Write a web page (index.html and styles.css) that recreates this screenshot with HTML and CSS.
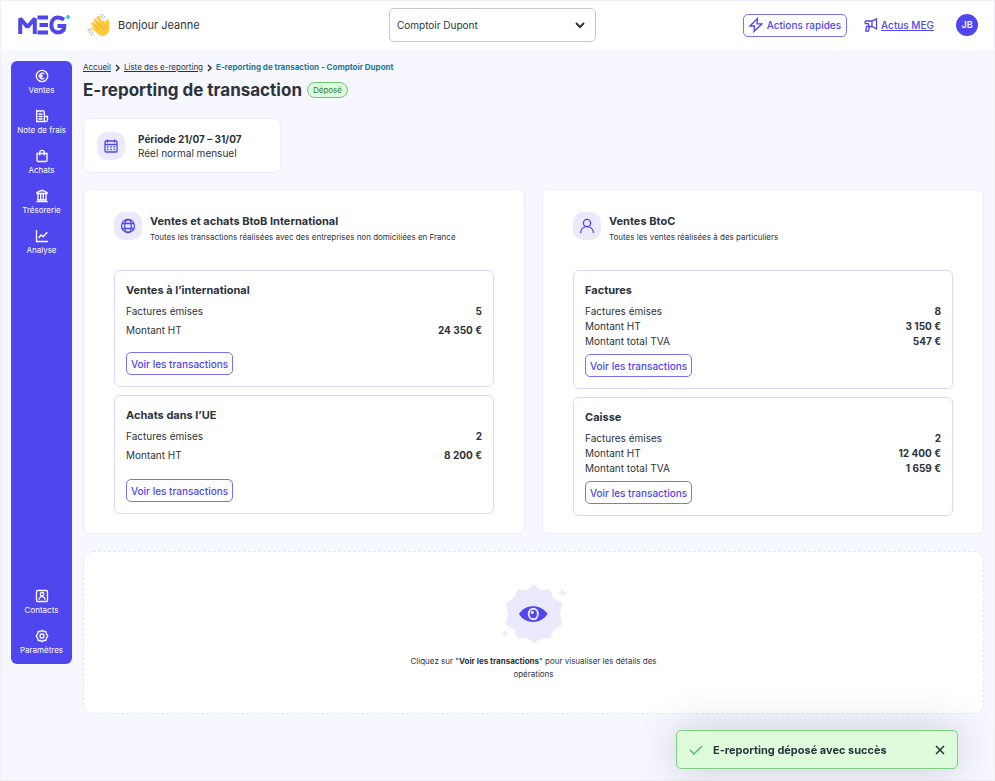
FILE: index.html
```html
<!DOCTYPE html>
<html lang="fr">
<head>
    <meta charset="UTF-8">
    <meta name="viewport" content="width=device-width, initial-scale=1">
    <title>E-reporting de transaction - MEG</title>
    <link rel="stylesheet" href="styles.css">
</head>
<body>
    <header class="topbar">
        <div class="topbar-left">
            <svg class="logo" width="54" height="22" viewBox="0 0 54 22" role="img" aria-label="MEG">
                <g fill="none" stroke="#4f46ee" stroke-width="4">
                    <path d="M3.200 20V4.500L10.500 13L17.800 4.500V20" stroke-linejoin="bevel"/>
                    <path d="M20.500 3.500H31M22.500 11H31M20.500 18.400H31"/>
                    <path d="M47 5.600C45.200 4.200 43 3.500 41 3.500C36.600 3.500 34.300 6.800 34.300 11C34.300 15.200 36.600 18.400 41 18.400C45 18.400 47.300 16 47.300 12H40.500"/>
                </g>
                <circle cx="51" cy="3" r="2" fill="#3cc8d8"/>
            </svg>
            <svg class="wave" width="24" height="24" viewBox="0 0 24 24" aria-hidden="true">
                <g fill="none" stroke="#ffc83d" stroke-linecap="round">
                    <path d="M8 7L15 16M5.800 10.500L13 18M11 4.500L17 13" stroke-width="3"/>
                    <path d="M6 15L10.500 18.500" stroke-width="2.600"/>
                    <path d="M20.300 8L20.800 15" stroke-width="3.200"/>
                </g>
                <path d="M9 11L17 7.500L19.500 11L22.200 14C22.800 19 20 22.300 16.500 23C13 23.300 10.500 21 8.500 18Z" fill="#ffc83d"/>
                <path d="M9.500 8.500L14 14M7.500 12.500L12 16.500M18.700 12C16.800 13 16.300 15 17 17" fill="none" stroke="#eba01c" stroke-width=".7" stroke-linecap="round"/>
                <path d="M13.500 1.300C15.500 1.300 17.500 3 18 5M13.500 3.500C15 3.700 16 4.800 16.300 6M1 15.500C1.200 19 3.500 21.700 6.800 22M3 15.500C3.200 18 4.800 19.700 7 20" fill="none" stroke="#a98660" stroke-width=".8" stroke-dasharray="2 1"/>
            </svg>
            <span class="hello">Bonjour Jeanne</span>
        </div>
        <div class="company">
            <select aria-label="Entreprise">
                <option>Comptoir Dupont</option>
            </select>
            <svg class="chevron" width="10" height="7" viewBox="0 0 10 7" aria-hidden="true"><path d="M1 1L5 5L9 1" fill="none" stroke="#2c333c" stroke-width="2"/></svg>
        </div>
        <div class="topbar-right">
            <button type="button" class="btn btn-quick">
                <svg class="icon" width="14" height="16" viewBox="0 0 14 16"><path d="M8.500 1.500L1 9H5.500L5 14.500L13 6.800H8L8.500 1.500Z"/></svg>
                Actions rapides
            </button>
            <a href="#" class="news">
                <svg class="icon" width="14" height="14" viewBox="0 0 14 14"><path d="M1.200 3H8L12.500 .8V11L8 8.500H4.500M8 3V8.500M1.200 3V5.700H4.500V8.500M2.500 8.500L1.800 13H4.500L5.500 8.500Z"/></svg>
                <span>Actus MEG</span>
            </a>
            <button type="button" class="avatar">JB</button>
        </div>
    </header>

    <div class="layout">
        <nav class="sidebar">
            <a href="#" class="nav-item">
                <svg class="icon" width="14" height="14" viewBox="0 0 14 14"><circle cx="7" cy="7" r="5.700"/><path d="M9.300 4.700C7.300 3.200 4.800 4.500 4.800 7S7.300 10.800 9.300 9.300M3.600 6.300H7.700M3.600 7.800H7.700"/></svg>
                Ventes
            </a>
            <a href="#" class="nav-item">
                <svg class="icon" width="14" height="14" viewBox="0 0 14 14"><path d="M1.700 12.500V1.500L3.200 2.500L4.500 1.500L6 2.500L7.500 1.500L9.300 2.500V12.500H1.700ZM9.300 7.500H12.500V11C12.500 12 11.700 12.500 11 12.500H9.300M3.500 5H7.500M3.500 7.500H7.500M3.500 10H7.500"/></svg>
                Note de frais
            </a>
            <a href="#" class="nav-item">
                <svg class="icon" width="14" height="14" viewBox="0 0 14 14"><path d="M2 4.500H12V11.500Q12 12.500 11 12.500H3Q2 12.500 2 11.500ZM4.700 6.500V3.500C4.700 .7 9.300 .7 9.300 3.500V6.500"/></svg>
                Achats
            </a>
            <a href="#" class="nav-item">
                <svg class="icon" width="14" height="14" viewBox="0 0 14 14"><path d="M2 4.500V3.500L7 1.300L12 3.500V4.500ZM3 4.500V11M5.700 5V11M8.300 5V11M11 4.500V11M2 11H12M1.300 12.700H12.700"/></svg>
                Trésorerie
            </a>
            <a href="#" class="nav-item">
                <svg class="icon" width="14" height="14" viewBox="0 0 14 14"><path d="M1.500 1V12.500H13M3.500 9L6 6L8 7.800L12.300 3.200"/></svg>
                Analyse
            </a>
            <a href="#" class="nav-item nav-bottom">
                <svg class="icon" width="14" height="14" viewBox="0 0 14 14"><rect x="1.500" y="1.500" width="11" height="11" rx="1"/><circle cx="7" cy="5.200" r="1.700"/><path d="M4 10.800C4 6.500 10 6.500 10 10.800"/></svg>
                Contacts
            </a>
            <a href="#" class="nav-item">
                <svg class="icon" width="14" height="14" viewBox="0 0 14 14"><path d="M5.600 2.500L7 1.200L8.400 2.500L10.800 2.500L11.400 4.800L12.800 7L11.400 9.200L10.800 11.500L8.400 11.500L7 12.800L5.600 11.500L3.200 11.500L2.600 9.200L1.200 7L2.600 4.800L3.200 2.500Z" stroke-linejoin="round"/><circle cx="7" cy="7" r="2"/></svg>
                Paramètres
            </a>
        </nav>

        <main class="content">
            <nav class="breadcrumb" aria-label="Fil d'Ariane">
                <a href="#">Accueil</a>
                <svg width="5" height="8" viewBox="0 0 5 8" aria-hidden="true"><path d="M1 1L4 4L1 7"/></svg>
                <a href="#">Liste des e-reporting</a>
                <svg width="5" height="8" viewBox="0 0 5 8" aria-hidden="true"><path d="M1 1L4 4L1 7"/></svg>
                <span class="current">E-reporting de transaction - Comptoir Dupont</span>
            </nav>
            <div class="page-title">
                <h1>E-reporting de transaction</h1>
                <span class="tag">Déposé</span>
            </div>

            <section class="period">
                <span class="badge">
                    <svg class="icon" width="16" height="16" viewBox="0 0 16 16"><rect x="2" y="3" width="12" height="11" rx="1"/><path d="M2 6.500H14M4.500 1.500V4.500M11.500 1.500V4.500"/><path d="M4 9H12M4 11.500H12" stroke-width="1.500" stroke-dasharray="1.500 1.700"/></svg>
                </span>
                <div>
                    <strong>Période 21/07 – 31/07</strong>
                    <p>Réel normal mensuel</p>
                </div>
            </section>

            <div class="columns">
                <section class="card">
                    <div class="card-head">
                        <span class="badge">
                            <svg class="icon" width="16" height="16" viewBox="0 0 16 16"><circle cx="8" cy="8" r="6.500"/><ellipse cx="8" cy="8" rx="3.300" ry="6.500"/><path d="M2.200 5.500H13.800M2.200 10.500H13.800"/></svg>
                        </span>
                        <div>
                            <h2>Ventes et achats BtoB International</h2>
                            <p>Toutes les transactions réalisées avec des entreprises non domiciliées en France</p>
                        </div>
                    </div>
                    <div class="box box-short">
                        <h3>Ventes à l’international</h3>
                        <dl class="spaced">
                            <div><dt>Factures émises</dt><dd>5</dd></div>
                            <div><dt>Montant HT</dt><dd>24 350 €</dd></div>
                        </dl>
                        <button type="button" class="btn">Voir les transactions</button>
                    </div>
                    <div class="box">
                        <h3>Achats dans l’UE</h3>
                        <dl class="spaced">
                            <div><dt>Factures émises</dt><dd>2</dd></div>
                            <div><dt>Montant HT</dt><dd>8 200 €</dd></div>
                        </dl>
                        <button type="button" class="btn">Voir les transactions</button>
                    </div>
                </section>

                <section class="card">
                    <div class="card-head">
                        <span class="badge">
                            <svg class="icon" width="16" height="16" viewBox="0 0 16 16"><circle cx="8" cy="5" r="3.600"/><path d="M1.500 15C2 6.600 14 6.600 14.500 15"/></svg>
                        </span>
                        <div>
                            <h2>Ventes BtoC</h2>
                            <p>Toutes les ventes réalisées à des particuliers</p>
                        </div>
                    </div>
                    <div class="box">
                        <h3>Factures</h3>
                        <dl>
                            <div><dt>Factures émises</dt><dd>8</dd></div>
                            <div><dt>Montant HT</dt><dd>3 150 €</dd></div>
                            <div><dt>Montant total TVA</dt><dd>547 €</dd></div>
                        </dl>
                        <button type="button" class="btn">Voir les transactions</button>
                    </div>
                    <div class="box">
                        <h3>Caisse</h3>
                        <dl>
                            <div><dt>Factures émises</dt><dd>2</dd></div>
                            <div><dt>Montant HT</dt><dd>12 400 €</dd></div>
                            <div><dt>Montant total TVA</dt><dd>1 659 €</dd></div>
                        </dl>
                        <button type="button" class="btn">Voir les transactions</button>
                    </div>
                </section>
            </div>

            <section class="empty">
                <svg width="66" height="60" viewBox="0 0 66 60" aria-hidden="true">
                    <g fill="#ebe9fe">
                        <path stroke="#ebe9fe" stroke-width="4" stroke-linejoin="round" d="M33 3L39.500 8.300L47.500 7.500L50.500 15.200L59 20L57 30L59 39.500L51.300 44.500L48 52.500L39.500 52L33 57L26.500 52L18 52.500L14.700 44.500L7 39.500L9 30L7 20L14.700 15.200L18 7.500L26.500 8.300Z"/>
                        <path d="M61.500 4Q62 8 66 8.500Q62 9 61.500 13Q61 9 57 8.500Q61 8 61.500 4ZM4 45Q4.500 49 8 49.500Q4.500 50 4 54Q3.500 50 0 49.500Q3.500 49 4 45Z"/>
                    </g>
                    <path d="M18 30C24 19.500 40 19.500 46.500 30C40 40.500 24 40.500 18 30Z" fill="#4f46ee"/>
                    <ellipse cx="32.300" cy="30" rx="5.500" ry="6.200" fill="#ebe9fe"/>
                    <ellipse cx="32.300" cy="30" rx="3.600" ry="4.200" fill="#4f46ee"/>
                    <circle cx="31.300" cy="28.300" r="1.600" fill="#ebe9fe"/>
                </svg>
                <p>Cliquez sur "<strong>Voir les transactions</strong>" pour visualiser les détails des opérations</p>
            </section>
        </main>
    </div>

    <div class="toast" role="status">
        <svg width="14" height="10" viewBox="0 0 14 10" aria-hidden="true"><path d="M1 5L5 9L13 1" fill="none" stroke="#5abf5e" stroke-width="1.500"/></svg>
        <span>E-reporting déposé avec succès</span>
        <button type="button" aria-label="Fermer">
            <svg width="10" height="10" viewBox="0 0 10 10"><path d="M1 1L9 9M9 1L1 9" fill="none" stroke="#2c333c" stroke-width="1.500"/></svg>
        </button>
    </div>
</body>
</html>
```

FILE: styles.css
```css
* {
    box-sizing: border-box;
}
body {
    margin: 0;
    min-height: 100vh;
    border: 1px solid #f0f0f4;
    background: #f7f7ff;
    color: #2c333c;
    font: 10px/14px Inter, "Liberation Sans", sans-serif;
}
h1, h2, h3, p, dl, dd {
    margin: 0;
}
button {
    font: inherit;
    cursor: pointer;
}
svg {
    display: block;
    flex: none;
}
.icon {
    fill: none;
    stroke: currentColor;
    stroke-width: 1.3;
}

/* top bar */
.topbar {
    display: grid;
    grid-template-columns: 37fr 207px 38fr;
    align-items: center;
    height: 49px;
    padding: 0 16px 1px;
    background: #fff;
}
.topbar-left, .topbar-right {
    display: flex;
    align-items: center;
}
.topbar-right {
    justify-content: flex-end;
}
.wave {
    margin: 0 7px 0 16px;
}
.hello {
    font-size: 11px;
}
.company {
    position: relative;
}
.company select {
    display: block;
    width: 100%;
    height: 34px;
    padding: 0 7px;
    appearance: none;
    border: 1px solid #c6c8cc;
    border-radius: 5px;
    background: #fff;
    color: inherit;
    font: inherit;
}
.chevron {
    position: absolute;
    top: 14px;
    right: 11px;
    pointer-events: none;
}
.btn {
    height: 23px;
    padding: 0 4px;
    border: 1px solid #7a72f2;
    border-radius: 5px;
    background: #fff;
    color: #4f46ee;
    font-weight: 500;
}
.btn-quick {
    display: flex;
    align-items: center;
    gap: 4px;
    padding: 0 5px;
}
.news {
    display: flex;
    align-items: center;
    gap: 3px;
    margin: 0 22px 0 17px;
    color: #4f46ee;
    font-weight: 500;
    text-decoration: none;
}
.news span {
    text-decoration: underline;
}
.avatar {
    width: 22px;
    height: 22px;
    padding: 0;
    border: 0;
    border-radius: 50%;
    background: #4f46ee;
    color: #fff;
    font-size: 9px;
    font-weight: 600;
}

/* sidebar */
.layout {
    display: flex;
    align-items: flex-start;
    gap: 11px;
    padding: 11px 10px;
}
.sidebar {
    display: flex;
    flex-direction: column;
    gap: 12px;
    flex: none;
    width: 61px;
    min-height: calc(100vh - 178px);
    padding: 8px 0 7px;
    border-radius: 6px;
    background: #5046f0;
}
.nav-item {
    display: flex;
    flex-direction: column;
    align-items: center;
    color: #fff;
    font-size: 8px;
    text-decoration: none;
    white-space: nowrap;
}
.nav-bottom {
    margin-top: auto;
}

/* page */
.content {
    flex: 1;
    min-width: 0;
}
.breadcrumb {
    display: flex;
    align-items: center;
    gap: 4px;
    font-size: 8px;
    line-height: 13px;
}
.breadcrumb a {
    color: inherit;
}
.breadcrumb path {
    fill: none;
    stroke: #2c333c;
    stroke-width: 1.5;
}
.breadcrumb .current {
    color: #237a90;
    font-weight: 700;
}
.page-title {
    display: flex;
    align-items: center;
    gap: 5px;
    margin: 4px 0 16px;
}
h1 {
    font-size: 17px;
    line-height: 24px;
}
.tag {
    padding: 0 5px;
    border: 1px solid #6fc973;
    border-radius: 8px;
    background: #defbdb;
    color: #2e7d43;
    font-size: 8px;
}
.badge {
    display: flex;
    align-items: center;
    justify-content: center;
    flex: none;
    width: 28px;
    height: 28px;
    border-radius: 10px;
    background: #ebe9fe;
    color: #4f46ee;
}
.period {
    display: flex;
    align-items: center;
    gap: 13px;
    width: 198px;
    height: 55px;
    padding: 0 13px;
    border: 1px solid #efedfe;
    border-radius: 6px;
    background: #fff;
}
.columns {
    display: grid;
    grid-template-columns: 1fr 1fr;
    gap: 17px;
    margin: 16px 0 17px;
}
.card {
    padding: 22px 30px 17px;
    border: 1px solid #efedfe;
    border-radius: 6px;
    background: #fff;
}
.card-head {
    display: flex;
    gap: 8px;
    margin-bottom: 26px;
}
h2, h3 {
    font-size: 11px;
    line-height: 18px;
}
.card-head p {
    font-size: 8px;
    line-height: 14px;
}
.box {
    display: flex;
    flex-direction: column;
    align-items: flex-start;
    min-height: 119px;
    padding: 10px 11px 11px;
    border: 1px solid #dcd8fb;
    border-radius: 6px;
}
.box-short {
    min-height: 117px;
}
.box + .box {
    margin-top: 8px;
}
dl {
    width: 100%;
    margin: 5px 0;
    line-height: 15px;
}
dl div {
    display: flex;
    justify-content: space-between;
}
.spaced div + div {
    margin-top: 4px;
}
dd {
    font-weight: 700;
}
.box .btn {
    margin-top: auto;
}
.empty {
    display: flex;
    flex-direction: column;
    align-items: center;
    gap: 11px;
    padding: 32px;
    border: 1px dashed #e6e3fb;
    border-radius: 10px;
    background: #fff;
    font-size: 8px;
    line-height: 13px;
    text-align: center;
}
.empty p {
    max-width: 260px;
}

.toast {
    position: fixed;
    right: 37px;
    bottom: 12px;
    display: flex;
    align-items: center;
    gap: 10px;
    width: 282px;
    height: 39px;
    padding: 0 12px;
    border: 1px solid #7fcf83;
    border-radius: 5px;
    background: #defbdc;
    box-shadow: 0 0 40px rgba(40, 40, 70, .22);
    font-size: 11px;
    font-weight: 700;
}
.toast button {
    margin-left: auto;
    padding: 0;
    border: 0;
    background: none;
}
```
